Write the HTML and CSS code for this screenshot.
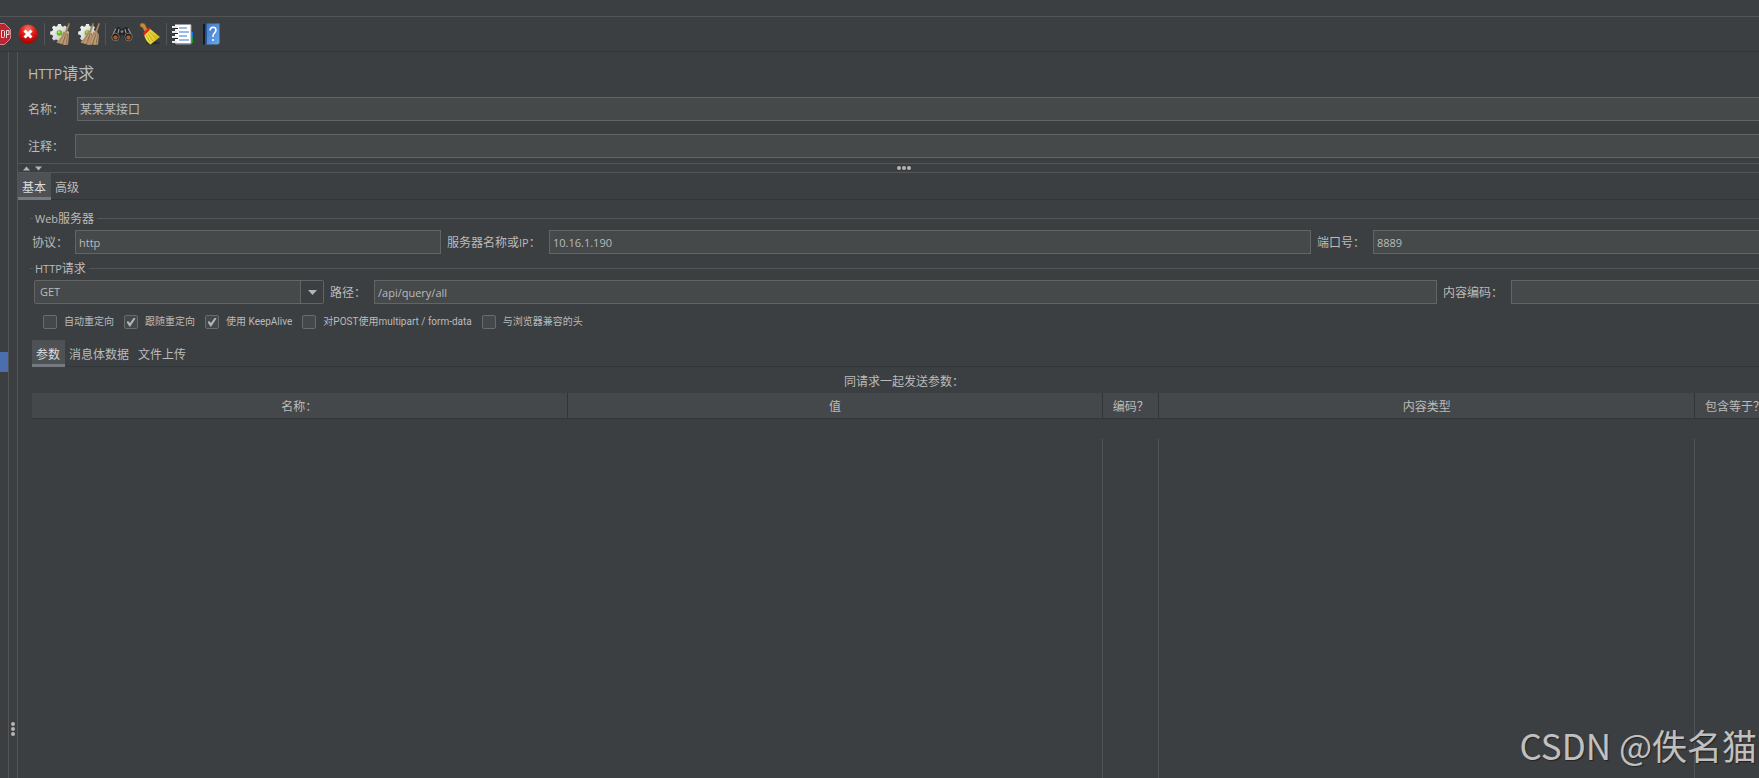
FILE: index.html
```
<!DOCTYPE html>
<html lang="zh-CN">
<head>
<meta charset="utf-8">
<title>HTTP请求</title>
<link rel="stylesheet" href="styles.css">
</head>
<body>
<svg class="defs" width="0" height="0" aria-hidden="true">
  <defs>
    <radialGradient id="red" cx="50%" cy="25%" r="75%"><stop offset="0" stop-color="#f47a72"/><stop offset=".5" stop-color="#dc1c18"/><stop offset="1" stop-color="#a80000"/></radialGradient>
    <linearGradient id="gearFill" x1="0" y1="0" x2="1" y2="1"><stop offset="0" stop-color="#ffffff"/><stop offset="1" stop-color="#b4b8b8"/></linearGradient>
    <linearGradient id="blue" x1="0" y1="0" x2="1" y2="1"><stop offset="0" stop-color="#3f78c8"/><stop offset="1" stop-color="#6aa6ee"/></linearGradient>
    <linearGradient id="yellow" x1="0" y1="0" x2="1" y2="0"><stop offset="0" stop-color="#f8ec58"/><stop offset="1" stop-color="#d2b414"/></linearGradient>
    <g id="gear">
      <path d="M8 1h3l.5 2 1.600.7L15 2.600l2 2-1.100 1.900.7 1.500 2.200.5v3l-2.200.5-.7 1.600 1.100 1.900-2 2-1.900-1.100-1.600.7-.5 2.200H8l-.5-2.200-1.600-.7L4 17.500l-2-2 1.100-1.900-.7-1.600-2.200-.5v-3l2.200-.5.7-1.500L2 4.600l2-2 1.900 1.100L7.500 3z" fill="url(#gearFill)"/>
      <circle cx="9.500" cy="10" r="3.800" fill="#d8dcd4"/>
      <circle cx="9.500" cy="10" r="2.800" fill="#62b81c"/>
      <circle cx="9" cy="9.300" r="1.200" fill="#a4e060"/>
    </g>
    <g id="besom">
      <path d="M19.500 0l1.500.6-3 9-2-.7z" fill="#a5825a"/>
      <path d="M14.500 8.500l4.500 1.200 1 3-1 9-3.500.3-8-2.500q4.500-4.500 7-11z" fill="#b39268"/>
      <path d="M15.500 10l-5.500 9M17 10.500L13.500 21M18.500 11l-1.500 10" stroke="#7d6040" stroke-width=".8" fill="none"/>
      <path d="M14.800 10.500l-4.800 8.500M16.200 10.500l-4 9.500M18 11l-2 10" stroke="#d2b78e" stroke-width=".5" fill="none"/>
    </g>
  </defs>
</svg>

<div class="menubar"></div>
<nav class="toolbar" aria-label="工具栏">
  <div class="group first">
    <button class="tool" aria-label="停止"><svg viewBox="0 0 22 22"><path d="M6.500.5h9l6 6v9l-6 6h-9l-6-6v-9z" fill="#b92632" stroke="#d9838b"/><path d="M12.500 7.500h2a1 1 0 0 1 1 1v5a1 1 0 0 1-1 1h-2zM17.500 15V7.500h2.500v4h-2.500" fill="none" stroke="#f0d8da"/></svg></button>
    <button class="tool" aria-label="关闭"><svg viewBox="0 0 22 22"><circle cx="11" cy="11" r="9.500" fill="url(#red)"/><path d="M7.500 7.500l7 7m0-7l-7 7" stroke="#fff" stroke-width="3"/></svg></button>
  </div>
  <div class="group">
    <button class="tool" aria-label="清除"><svg viewBox="0 0 22 22"><use href="#gear"/><use href="#besom" x="-1"/></svg></button>
    <button class="tool" aria-label="清除全部"><svg viewBox="0 0 22 22"><use href="#gear"/><use href="#besom" x="-5"/><use href="#besom" x="1"/></svg></button>
  </div>
  <div class="group">
    <button class="tool" aria-label="查找"><svg viewBox="0 0 22 22"><path d="M5 4.500l3-.5 2 2h2l2-2 3 .5 4 8-3 5-5-1-1-5h-2l-1 5-5 1-4-5z" fill="#222"/><path d="M5 5.500L2 11M8 6l-1 4M14 6l1 4M17 5.500l3 5.500" stroke="#949494" stroke-width="1.200"/><circle cx="11" cy="8.500" r="1.500" fill="#777"/><circle cx="4.500" cy="14" r="3.800" fill="#151515" stroke="#757575"/><circle cx="17.500" cy="14" r="3.800" fill="#151515" stroke="#757575"/><circle cx="4.500" cy="14.500" r="2.200" fill="#a75a28"/><circle cx="17.500" cy="14.500" r="2.200" fill="#a75a28"/></svg></button>
    <button class="tool" aria-label="重置查找"><svg viewBox="0 0 22 22"><ellipse cx="14" cy="20" rx="7" ry="1.500" fill="#292b2c"/><path d="M1 2q0-2 2.500-2t3 2.500L8.500 7 6 9 3.500 4.500Q1 4 1 2z" fill="#c88b3a" stroke="#8a5920" stroke-width=".6"/><path d="M5 10.500L10 5l11 9-9.500 7.500Q6 18 5 10.500z" fill="url(#yellow)"/><path d="M7 12l4 7M9 10.500l5 8M10.500 9l7 7" stroke="#b89a10" stroke-width=".8"/><path d="M4 10.300L9.600 4.400l2 1.600-6 6.200z" fill="#d82920"/></svg></button>
  </div>
  <div class="group last">
    <button class="tool" aria-label="函数助手"><svg viewBox="0 0 22 22"><path d="M18 9h3v6h-3z" fill="#1677e8"/><path d="M18 15h3v5h-3z" fill="#16981e"/><path d="M3 1.500h16v19H3z" fill="#fff"/><path d="M19 2v19H4" fill="none" stroke="#9c9c9c"/><path d="M7 5h8M7 9h10M7 13h8M7 17h10" stroke="#3579cf" stroke-width="1.200"/><path d="M0 4h5M0 9h5M0 14h5M0 19h5" stroke="#e8e8e8" stroke-width="2"/><path d="M2 5.500h4M2 10.500h4M2 15.500h4" stroke="#222" stroke-width="1.200"/></svg></button>
    <button class="tool" aria-label="帮助"><svg viewBox="0 0 22 22"><path d="M3 1h3v20.500H3z" fill="#151a20"/><path d="M5.500 21V1.500L7 .5h12.500V20L18 21.500H5.500z" fill="url(#blue)"/><path d="M6.500 1v20" stroke="#28589c"/><path d="M10 7.500q.2-3.300 3-3.300T16 7q0 1.800-1.600 3.100T13 14" fill="none" stroke="#fff" stroke-width="1.500"/><circle cx="13" cy="17" r="1.100" fill="#fff"/></svg></button>
  </div>
</nav>

<div class="workspace">
  <aside class="tree"><div class="tree-selection"></div></aside>
  <div class="divider"><i class="dot"></i><i class="dot"></i><i class="dot"></i></div>
  <main class="editor">
    <section class="head">
      <h1><span class="latin">HTTP</span>请求</h1>
      <div class="line name"><label for="name">名称：</label><input id="name" type="text" value="某某某接口"></div>
      <div class="line"><label for="comment">注释：</label><input id="comment" type="text"></div>
    </section>
    <div class="splitter">
      <svg class="arrows" viewBox="0 0 20 5" aria-hidden="true"><path d="M0 4.500L3.500.500 7 4.500zM12 .5h7l-3.500 4z" fill="#b4b4b4"/></svg>
      <div class="dots"><i class="dot"></i><i class="dot"></i><i class="dot"></i></div>
    </div>
    <div class="tabs" role="tablist">
      <button class="tab active" role="tab" aria-selected="true">基本</button>
      <button class="tab" role="tab" aria-selected="false">高级</button>
    </div>
    <div class="page">
      <fieldset>
        <legend><span class="latin">Web</span>服务器</legend>
        <div class="server">
          <label for="protocol">协议：</label><input id="protocol" type="text" value="http">
          <label for="host">服务器名称或<span class="latin">IP</span>：</label><input id="host" type="text" value="10.16.1.190">
          <label for="port">端口号：</label><input id="port" type="text" value="8889">
        </div>
      </fieldset>
      <fieldset>
        <legend><span class="latin">HTTP</span>请求</legend>
        <div class="request">
          <div class="combo">
            <select aria-label="请求方法"><option>GET</option><option>POST</option></select>
            <span class="combo-arrow"><svg viewBox="0 0 9 5" aria-hidden="true"><path d="M0 0h9L4.500 5z" fill="#b4b4b4"/></svg></span>
          </div>
          <label for="path">路径：</label><input id="path" type="text" value="/api/query/all">
          <label for="encoding">内容编码：</label><input id="encoding" type="text">
        </div>
        <div class="checks">
          <label><input type="checkbox">自动重定向</label>
          <label><input type="checkbox" checked>跟随重定向</label>
          <label><input type="checkbox" checked>使用 KeepAlive</label>
          <label><input type="checkbox">对POST使用multipart / form-data</label>
          <label><input type="checkbox">与浏览器兼容的头</label>
        </div>
      </fieldset>
      <div class="tabs" role="tablist">
        <button class="tab active" role="tab" aria-selected="true">参数</button>
        <button class="tab" role="tab" aria-selected="false">消息体数据</button>
        <button class="tab" role="tab" aria-selected="false">文件上传</button>
      </div>
      <div class="caption" id="caption">同请求一起发送参数：</div>
      <div class="grid">
        <table aria-labelledby="caption">
          <colgroup><col><col><col class="narrow"><col><col class="wide"></colgroup>
          <thead><tr><th>名称：</th><th>值</th><th>编码？</th><th>内容类型</th><th>包含等于？</th></tr></thead>
          <tbody>
            <tr class="spacer"><td colspan="5"></td></tr>
            <tr class="empty"><td></td><td></td><td></td><td></td><td></td></tr>
          </tbody>
        </table>
      </div>
    </div>
  </main>
</div>
<div class="watermark">CSDN @佚名猫</div>
</body>
</html>
```
FILE: styles.css
```
:root {
  --bg: #3c3f41;
  --field: #45494a;
  --border: #646464;
  --line: #555555;
  --dark: #323537;
  --text: #bbbbbb;
}

* { box-sizing: border-box; }

body {
  margin: 0;
  height: 100vh;
  overflow: hidden;
  display: flex;
  flex-direction: column;
  background: var(--bg);
  color: var(--text);
  font: 12px/16px "Noto Sans CJK SC", sans-serif;
}

button, input, select { font: inherit; color: inherit; }
.defs { position: absolute; }

.latin { font-family: "Open Sans", sans-serif; font-size: 11px; line-height: 1; }

.menubar { flex: none; height: 17px; border-bottom: 1px solid #515355; }

.toolbar {
  flex: none;
  display: flex;
  align-items: center;
  padding: 6px 0;
  border-bottom: 1px solid var(--dark);
}
.group { display: flex; gap: 6px; padding: 0 5px; border-right: 1px solid var(--line); }
.group.first { margin-left: -11px; padding-left: 0; }
.group.last { border: 0; }
.tool { width: 22px; height: 22px; padding: 0; border: 0; background: none; }
.tool svg { display: block; width: 22px; height: 22px; }

.workspace { flex: 1; min-height: 0; display: flex; overflow: hidden; }

.tree { flex: none; width: 8px; padding-top: 300px; }
.tree-selection { height: 20px; background: #4b6eaf; }

.divider {
  flex: none;
  width: 10px;
  padding-bottom: 42px;
  border: solid var(--line);
  border-width: 0 1px;
  display: flex;
  flex-direction: column;
  justify-content: flex-end;
  align-items: center;
  gap: 1px;
}
.dot { width: 4px; height: 4px; border-radius: 2px; background: #b4b4b4; }

/* The editor runs on past the right edge of the window. */
.editor { flex: 1; min-width: 0; margin-right: -30px; display: flex; flex-direction: column; }

.head { padding: 8px 0 5px 10px; }
h1 { height: 24px; margin: 0 0 13px; font-size: 16px; font-weight: 400; line-height: 24px; }
h1 .latin { font-size: 14px; }
.line { display: flex; align-items: center; }
.line label { width: 47px; }
.line.name { margin-bottom: 13px; }
.line.name label { width: 49px; }
.line input { flex: 1; }

input[type="text"] {
  min-width: 0;
  width: 100%;
  height: 24px;
  padding: 0 3px;
  border: 1px solid var(--border);
  background: var(--field);
  font-family: "Open Sans", "Noto Sans CJK SC", sans-serif;
}
.server input[type="text"], .request input[type="text"] { font-size: 11px; }
#name { padding: 0 2px; }

.splitter {
  flex: none;
  height: 10px;
  padding: 0 5px;
  border: solid var(--line);
  border-width: 1px 0;
  display: grid;
  grid-template-columns: 20px 1fr 20px;
  align-items: center;
}
.arrows { display: block; width: 20px; height: 5px; }
.dots { display: flex; justify-content: center; gap: 1px; }

.tabs { flex: none; display: flex; height: 27px; border-bottom: 1px solid var(--dark); }
.tab {
  height: 27px;
  padding: 3px 4px 0;
  border: 0;
  border-bottom: 3px solid transparent;
  background: none;
}
.tab.active { padding-right: 5px; background: #4e5254; border-bottom-color: #747a80; color: #dddddd; }
.page .tab { padding-right: 5px; }

.page { flex: 1; min-height: 0; display: flex; flex-direction: column; padding: 10px 13px 0 14px; }

fieldset { min-width: 0; margin: 0 0 0 -2px; padding: 4px 0 0 2px; border: 0 solid var(--line); border-top-width: 1px; }
fieldset + fieldset { margin-top: 6px; }
legend { height: 16px; margin-left: 1px; padding: 0 3px 0 2px; line-height: 16px; }

.server { display: grid; grid-template-columns: 43px 366fr 108px 762fr 62px 403fr; align-items: center; }
.request { display: grid; grid-template-columns: 290px 50px 1063fr 74px 265fr; align-items: center; padding-left: 2px; }
.server label + input + label, .request label { padding-left: 6px; }
.server label, .request label { height: 16px; white-space: nowrap; }

.combo { display: grid; grid-template-columns: 1fr 23px; height: 24px; border: 1px solid var(--border); border-radius: 2px; }
.combo select {
  grid-area: 1 / 1 / 2 / 3;
  width: 100%;
  appearance: none;
  padding: 0 5px;
  border: 0;
  border-radius: 1px;
  background: var(--field);
  font-family: "Open Sans", sans-serif;
  font-size: 11px;
}
.combo-arrow {
  grid-area: 1 / 2;
  z-index: 1;
  display: grid;
  place-items: center;
  border-left: 1px solid var(--border);
  background: var(--bg);
  pointer-events: none;
}
.combo-arrow svg { width: 9px; height: 5px; }

.checks {
  display: flex;
  gap: 10px;
  padding: 11px 0 11px 11px;
  font: 10px/14px Roboto, "Noto Sans CJK SC", sans-serif;
}
.checks label { display: flex; align-items: center; gap: 7px; height: 14px; }
.checks input {
  appearance: none;
  width: 14px;
  height: 14px;
  margin: 0;
  border: 1px solid #6b6b6b;
  border-radius: 2px;
  background: #43494a;
  display: grid;
  place-items: center;
}
.checks input:checked::before {
  content: "";
  width: 9px;
  height: 9px;
  background: #b4b4b4;
  clip-path: polygon(0 50%, 18% 38%, 38% 62%, 82% 0, 100% 10%, 42% 100%, 32% 100%);
}

.caption { flex: none; padding: 6px 0 4px; text-align: center; }

.grid { flex: 1; min-height: 0; }
table { width: 100%; height: 100%; table-layout: fixed; border-collapse: separate; border-spacing: 0; }
.narrow { width: 56px; }
.wide { width: 81px; }
th {
  height: 26px;
  padding: 1px 0 0;
  border: solid var(--dark);
  border-width: 0 1px 1px 0;
  background: #45484a;
  font-weight: 400;
  white-space: nowrap;
}
td { padding: 0; }
.spacer td { height: 20px; }
.empty td { height: 100%; border-right: 1px solid #505254; }
.empty td:first-child { border-right: 0; }

.watermark {
  position: absolute;
  right: 2px;
  bottom: 10px;
  color: #c0c0c0;
  font-size: 35px;
  line-height: 46px;
  text-shadow: 1px 1px 1px #222222;
}
```
